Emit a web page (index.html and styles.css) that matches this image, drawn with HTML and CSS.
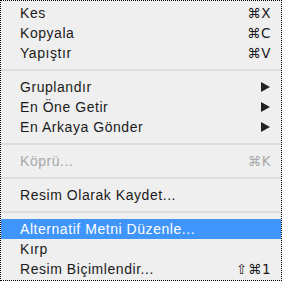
FILE: index.html
```html
<!DOCTYPE html>
<html>
<head>
<meta charset="utf-8">
<link rel="stylesheet" href="styles.css">
</head>
<body>
<div class="menu">
  <div class="item"><span class="label">Kes</span><span class="key">⌘X</span></div>
  <div class="item"><span class="label">Kopyala</span><span class="key">⌘C</span></div>
  <div class="item"><span class="label">Yapıştır</span><span class="key">⌘V</span></div>
  <div class="sep"></div>
  <div class="item"><span class="label">Gruplandır</span><span class="arrow"></span></div>
  <div class="item"><span class="label">En Öne Getir</span><span class="arrow"></span></div>
  <div class="item"><span class="label">En Arkaya Gönder</span><span class="arrow"></span></div>
  <div class="sep"></div>
  <div class="item disabled"><span class="label">Köprü...</span><span class="key">⌘K</span></div>
  <div class="sep"></div>
  <div class="item"><span class="label">Resim Olarak Kaydet...</span></div>
  <div class="sep"></div>
  <div class="item active"><span class="label">Alternatif Metni Düzenle...</span></div>
  <div class="item"><span class="label">Kırp</span></div>
  <div class="item"><span class="label">Resim Biçimlendir...</span><span class="key">⇧⌘1</span></div>
</div>
</body>
</html>
```
FILE: styles.css
```css
html, body {
  margin: 0;
  padding: 0;
  background: #ffffff;
}
.menu {
  box-sizing: border-box;
  width: 282px;
  height: 281px;
  border: 1px dotted #000;
  background: #efefef;
  padding-top: 2px;
  display: flex;
  flex-direction: column;
  font-family: "Liberation Sans", Arial, sans-serif;
  font-size: 14px;
  color: #1b1b1b;
}
.item {
  height: 20px;
  display: flex;
  align-items: center;
  justify-content: space-between;
  padding: 0 10px 0 19px;
}
.label {
  letter-spacing: 0.55px;
}
.item.active {
  background: #3f95f9;
  color: #ffffff;
}
.item.disabled {
  color: #a8a8a8;
}
.key {
  font-family: "DejaVu Sans", "Liberation Sans", sans-serif;
  font-size: 13.5px;
  letter-spacing: 0.5px;
}
.arrow {
  width: 0;
  height: 0;
  border-top: 5px solid transparent;
  border-bottom: 5px solid transparent;
  border-left: 9px solid #222;
  margin-right: 1px;
}
.sep {
  height: 14px;
  display: flex;
  align-items: center;
}
.sep::before {
  content: "";
  display: block;
  width: 100%;
  height: 2px;
  background: #dcdcdc;
}
```
